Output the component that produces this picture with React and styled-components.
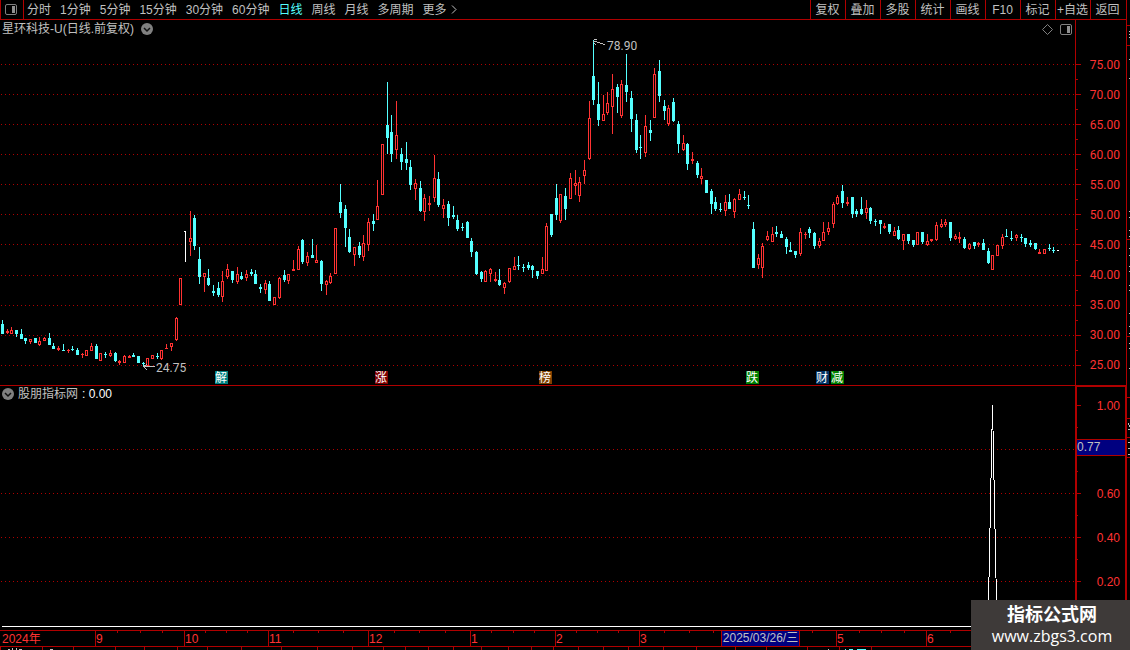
import React from "react";
import styled, { createGlobalStyle } from "styled-components";

const LINE = "#b00000";
const UP = "#ff3232";
const DOWN = "#54ffff";
const GREY = "#c0c0c0";

// x, high, body top, body bottom, low
const rising = [
  [7, 329, 331, 333, 334], [11, 327, 330, 334, 334], [30, 339, 339, 342, 344], [39, 337, 341, 345, 346],
  [44, 337, 338, 341, 341], [58, 346, 348, 350, 351], [68, 349, 350, 351, 353], [82, 353, 354, 355, 358],
  [86, 350, 350, 356, 356], [91, 343, 346, 351, 351], [100, 353, 353, 361, 361], [110, 350, 353, 356, 357],
  [119, 360, 361, 363, 365], [124, 355, 356, 363, 363], [129, 355, 356, 358, 358], [147, 358, 358, 366, 366],
  [152, 355, 355, 359, 359], [161, 350, 350, 359, 360], [166, 344, 348, 349, 349], [171, 343, 343, 347, 351],
  [176, 317, 318, 340, 341], [180, 278, 278, 305, 305], [190, 211, 238, 242, 256], [204, 273, 273, 277, 292],
  [222, 271, 281, 297, 302], [227, 264, 269, 277, 279], [237, 267, 274, 282, 284], [246, 270, 274, 278, 281],
  [265, 280, 283, 290, 294], [274, 297, 297, 305, 305], [279, 277, 278, 298, 299], [288, 274, 274, 281, 284],
  [293, 260, 269, 271, 271], [298, 246, 249, 270, 270], [307, 252, 256, 263, 266], [316, 245, 260, 263, 263],
  [326, 280, 281, 285, 295], [330, 273, 276, 283, 284], [335, 228, 228, 274, 274], [354, 247, 247, 255, 266],
  [363, 235, 243, 257, 261], [368, 218, 222, 245, 251], [377, 180, 206, 220, 220], [382, 144, 144, 195, 195],
  [396, 101, 135, 150, 159], [415, 179, 183, 189, 200], [424, 194, 198, 212, 221], [429, 196, 203, 205, 211],
  [434, 155, 178, 198, 202], [443, 199, 205, 209, 218], [485, 270, 271, 282, 282], [490, 268, 269, 274, 282],
  [495, 272, 279, 281, 282], [504, 282, 283, 288, 294], [509, 268, 268, 282, 283], [514, 257, 266, 270, 270],
  [542, 257, 269, 274, 274], [546, 223, 226, 271, 271], [560, 194, 194, 221, 223], [570, 173, 178, 199, 199],
  [575, 170, 183, 186, 195], [579, 177, 182, 196, 202], [584, 160, 170, 176, 184], [589, 101, 118, 159, 160],
  [603, 95, 114, 121, 121], [607, 92, 103, 113, 115], [612, 74, 89, 107, 134], [621, 80, 84, 116, 118],
  [645, 115, 126, 153, 157], [654, 68, 74, 118, 118], [668, 105, 108, 124, 126], [683, 135, 143, 150, 151],
  [692, 152, 159, 161, 164], [701, 168, 176, 179, 184], [725, 195, 202, 211, 216], [734, 198, 199, 212, 218],
  [739, 189, 194, 200, 200], [758, 254, 258, 265, 269], [762, 243, 246, 268, 278], [767, 231, 236, 240, 241],
  [772, 227, 234, 242, 242], [800, 228, 232, 254, 256], [805, 232, 234, 235, 239], [819, 238, 241, 246, 248],
  [823, 222, 232, 241, 241], [828, 222, 228, 232, 235], [833, 202, 204, 224, 228], [837, 195, 197, 204, 205],
  [847, 197, 202, 204, 206], [866, 200, 208, 213, 219], [884, 223, 226, 228, 229], [894, 227, 231, 236, 236],
  [903, 234, 234, 241, 250], [917, 232, 232, 245, 245], [927, 234, 241, 245, 246], [931, 239, 239, 241, 242],
  [936, 222, 225, 240, 241], [941, 219, 224, 227, 228], [945, 219, 222, 225, 227], [955, 234, 236, 239, 240],
  [959, 232, 237, 239, 243], [969, 243, 244, 249, 250], [978, 242, 243, 245, 247], [992, 255, 255, 270, 270],
  [997, 245, 245, 256, 256], [1002, 234, 237, 246, 249], [1016, 234, 235, 238, 241], [1039, 249, 252, 254, 254],
  [1044, 249, 249, 254, 254],
];

const falling = [
  [2, 320, 324, 334, 334], [16, 330, 330, 334, 337], [21, 329, 334, 339, 339], [25, 338, 338, 341, 344],
  [35, 338, 338, 343, 343], [49, 333, 338, 345, 345], [53, 343, 346, 349, 349], [63, 344, 350, 351, 351],
  [72, 346, 349, 350, 351], [77, 348, 350, 355, 355], [96, 344, 346, 359, 359], [105, 352, 354, 355, 358],
  [115, 352, 353, 361, 362], [133, 353, 355, 357, 357], [138, 356, 356, 363, 363], [143, 362, 363, 364, 367],
  [157, 353, 356, 357, 359], [194, 215, 218, 246, 250], [199, 247, 259, 277, 284], [208, 269, 278, 285, 286],
  [213, 285, 291, 293, 296], [218, 282, 288, 295, 297], [232, 271, 271, 280, 283], [241, 272, 276, 279, 280],
  [251, 269, 272, 274, 276], [255, 270, 274, 284, 284], [260, 284, 287, 289, 293], [269, 281, 284, 301, 301],
  [284, 270, 275, 280, 282], [302, 239, 240, 262, 264], [312, 239, 255, 258, 258], [321, 260, 261, 284, 291],
  [340, 184, 202, 213, 218], [345, 205, 209, 228, 247], [349, 229, 237, 252, 253], [359, 242, 246, 255, 258],
  [373, 214, 221, 224, 231], [387, 82, 125, 138, 154], [391, 115, 132, 154, 162], [401, 148, 154, 162, 170],
  [406, 142, 159, 163, 170], [410, 160, 167, 185, 190], [420, 181, 188, 211, 212], [438, 172, 179, 205, 207],
  [448, 201, 204, 218, 226], [453, 206, 215, 217, 219], [457, 215, 220, 229, 231], [462, 223, 227, 228, 231],
  [467, 221, 222, 238, 238], [471, 238, 241, 252, 257], [476, 251, 252, 274, 275], [481, 271, 272, 279, 282],
  [499, 269, 280, 285, 286], [518, 256, 265, 266, 270], [523, 264, 267, 268, 272], [528, 262, 265, 268, 270],
  [532, 265, 266, 270, 278], [537, 271, 271, 276, 279], [551, 214, 214, 235, 237], [556, 184, 198, 215, 220],
  [565, 188, 196, 209, 220], [593, 40, 76, 100, 105], [598, 82, 104, 120, 126], [617, 84, 87, 97, 113],
  [626, 54, 85, 92, 102], [631, 91, 98, 119, 132], [636, 114, 120, 150, 153], [640, 135, 147, 148, 159],
  [650, 120, 130, 133, 141], [659, 60, 71, 96, 102], [664, 100, 106, 111, 120], [673, 98, 102, 121, 122],
  [678, 121, 124, 144, 153], [687, 143, 144, 164, 170], [697, 161, 163, 175, 178], [706, 180, 180, 193, 193],
  [711, 189, 191, 204, 214], [715, 197, 202, 209, 211], [720, 203, 209, 210, 212], [729, 194, 202, 209, 209],
  [744, 191, 197, 198, 200], [748, 195, 205, 206, 209], [753, 222, 229, 268, 268], [776, 226, 232, 234, 237],
  [781, 231, 234, 238, 238], [786, 237, 239, 247, 254], [790, 242, 250, 252, 252], [795, 251, 251, 255, 258],
  [809, 227, 229, 233, 238], [814, 232, 233, 246, 249], [842, 185, 191, 203, 208], [852, 197, 197, 214, 218],
  [856, 209, 211, 214, 217], [861, 197, 209, 214, 215], [870, 207, 208, 221, 224], [875, 219, 221, 222, 226],
  [880, 220, 220, 224, 234], [889, 224, 224, 232, 234], [898, 226, 230, 239, 240], [908, 234, 234, 241, 244],
  [913, 240, 240, 245, 247], [922, 232, 232, 242, 244], [950, 222, 222, 238, 241], [964, 237, 239, 248, 249],
  [974, 242, 242, 246, 249], [983, 239, 243, 250, 250], [988, 248, 251, 263, 264], [1006, 229, 236, 237, 237],
  [1011, 231, 238, 239, 241], [1021, 234, 237, 238, 242], [1025, 238, 238, 244, 247], [1030, 240, 243, 245, 247],
  [1035, 243, 243, 249, 250], [1049, 244, 248, 249, 251], [1053, 247, 250, 251, 253],
];

const periods = ["分时", "1分钟", "5分钟", "15分钟", "30分钟", "60分钟", "日线", "周线", "月线", "多周期"];
const tools = ["复权", "叠加", "多股", "统计", "画线", "F10", "标记", "+自选", "返回"];
const prices = ["75.00", "70.00", "65.00", "60.00", "55.00", "50.00", "45.00", "40.00", "35.00", "30.00", "25.00"];
const priceLines = [64, 94, 124, 154, 184, 214, 244, 275, 305, 335, 365];
const priceHalves = [79, 109, 139, 169, 199, 229, 260, 290, 320, 350];
const valueLines = [449, 493, 537, 581];

const badges = [
  { x: 215, label: "解", color: "#008080" },
  { x: 375, label: "涨", color: "#800000" },
  { x: 539, label: "榜", color: "#804000" },
  { x: 746, label: "跌", color: "#008000" },
  { x: 816, label: "财", color: "#003366" },
  { x: 831, label: "减", color: "#008000" },
];

const weekTicks = [
  117, 140, 162, 205, 226, 247, 293, 318, 343, 394, 419, 445, 491, 513, 534, 576, 597, 618, 664, 689, 713, 812,
  859, 881, 904, 950,
];
const tabEdges = [
  0, 42, 73, 115, 144, 177, 207, 241, 281, 317, 352, 383, 405, 428, 453, 481, 508, 531, 553, 578, 603, 628, 663,
  696, 735, 766, 807, 839, 871,
];

const Candle = ({ data, color, hollow }) => {
  const [x, high, top, bottom, low] = data;
  const height = bottom - top;
  return (
    <g fill={color}>
      {high < top && <rect x={x} y={high} width="1" height={top - high} />}
      {low > bottom && <rect x={x} y={bottom} width="1" height={low - bottom} />}
      <rect x={x - 1} y={top} width="3" height={height} />
      {hollow && height > 2 && <rect x={x} y={top + 1} width="1" height={height - 2} fill="#000" />}
    </g>
  );
};

const DottedLine = ({ y }) => (
  <line x1="1" x2="1075" y1={y + 0.5} y2={y + 0.5} stroke={LINE} strokeDasharray="1 3" />
);

const PanelIcon = () => (
  <svg width="12" height="11" viewBox="0 0 12 11" fill="none" aria-hidden="true">
    <rect x="0.5" y="0.5" width="11" height="10" rx="1.5" stroke="#808080" />
    <rect x="7" y="2" width="3" height="7" fill="#909090" />
  </svg>
);

const DiamondIcon = () => (
  <svg width="11" height="11" viewBox="0 0 11 11" fill="none" aria-hidden="true">
    <path d="M5.5 0.5L10.5 5.5L5.5 10.5L0.5 5.5Z" stroke="#808080" />
  </svg>
);

const DropIcon = () => (
  <svg width="12" height="12" viewBox="0 0 12 12" fill="none" aria-hidden="true">
    <circle cx="6" cy="6" r="6" fill="#808080" />
    <path d="M3 5L6 8L9 5" stroke="#101010" strokeWidth="1.5" />
  </svg>
);

const MoreIcon = () => (
  <svg width="6" height="9" viewBox="0 0 6 9" fill="none" aria-hidden="true">
    <path d="M1 0.5L5 4.5L1 8.5" stroke={GREY} />
  </svg>
);

const PriceChart = () => (
  <Chart viewBox="0 38 1075 347" role="img" aria-label="日线">
    {priceLines.map((y) => (
      <DottedLine key={y} y={y} />
    ))}
    {rising.map((c) => (
      <Candle key={c[0]} data={c} color={UP} hollow />
    ))}
    {falling.map((c) => (
      <Candle key={c[0]} data={c} color={DOWN} />
    ))}
    <path d="M184 231h2v31h-1v-30h-1zM1057 250h2v1h-2z" fill="#fff" />
    <path d="M594 39h3v1h-3zM593 41h4v1h-4zM597 42h3v1h-3zM600 43h3v1h-3zM603 44h2v1h-2zM594 43h1v1h-1zM595 44h1v1h-1z" fill={GREY} />
    <path d="M143 366h12v1h-12zM144 365h2v1h-2zM146 364h1v1h-1zM144 367h1v1h-1zM145 368h1v1h-1zM146 369h1v1h-1z" fill={GREY} />
    <ChartText x="607" y="50">78.90</ChartText>
    <ChartText x="156" y="372">24.75</ChartText>
    {badges.map((b) => (
      <g key={b.x}>
        <path d={`M${b.x} 371h12l1 1v12h-13z`} fill={b.color} />
        <BadgeText x={b.x} y="382">{b.label}</BadgeText>
      </g>
    ))}
  </Chart>
);

const IndicatorChart = () => (
  <Chart viewBox="0 402 1075 228" role="img" aria-label="股朋指标网">
    {valueLines.map((y) => (
      <DottedLine key={y} y={y} />
    ))}
    <path d="M2 626.5H988L992.5 405L997 626.5H1075" stroke="#fff" fill="none" />
  </Chart>
);

const App = () => (
  <Screen>
    <GlobalStyle />
    <Terminal>
      <Toolbar>
        <PanelToggle aria-label="panel">
          <PanelIcon />
        </PanelToggle>
        <Periods>
          {periods.map((p) => (
            <PeriodButton key={p} $active={p === "日线"}>{p}</PeriodButton>
          ))}
          <PeriodButton>
            更多
            <MoreIcon />
          </PeriodButton>
        </Periods>
        <Tools>
          {tools.map((t) => (
            <ToolButton key={t}>{t}</ToolButton>
          ))}
        </Tools>
      </Toolbar>

      <PricePanel>
        <ChartColumn>
          <PriceTitle>
            <span>星环科技-U(日线.前复权)</span>
            <DropIcon />
            <TitleIcons>
              <DiamondIcon />
              <PanelIcon />
            </TitleIcons>
          </PriceTitle>
          <PriceChart />
        </ChartColumn>
        <PriceAxis>
          <Ticks viewBox="0 20 5 365">
            {priceLines.map((y) => (
              <rect key={y} x="0" y={y} width="5" height="1" />
            ))}
            {priceHalves.map((y) => (
              <rect key={y} x="0" y={y} width="2" height="1" />
            ))}
          </Ticks>
          <PriceLabels>
            {prices.map((p) => (
              <AxisLabel key={p}>{p}</AxisLabel>
            ))}
          </PriceLabels>
        </PriceAxis>
      </PricePanel>

      <IndicatorPanel>
        <ChartColumn>
          <IndicatorTitle>
            <DropIcon />
            <span>股朋指标网</span>
            <Value>: 0.00</Value>
          </IndicatorTitle>
          <IndicatorChart />
        </ChartColumn>
        <ValueAxis>
          <Ticks viewBox="0 387 5 243">
            {[405, 493, 537, 581].map((y) => (
              <rect key={y} x="0" y={y} width="4" height="1" />
            ))}
            {[427, 471, 515, 559].map((y) => (
              <rect key={y} x="0" y={y} width="1" height="1" />
            ))}
          </Ticks>
          <ValueLabels>
            <AxisLabel>1.00</AxisLabel>
            <CurrentValue>0.77</CurrentValue>
            <AxisLabel>0.60</AxisLabel>
            <AxisLabel>0.40</AxisLabel>
            <AxisLabel>0.20</AxisLabel>
          </ValueLabels>
        </ValueAxis>
      </IndicatorPanel>

      <Timeline>
        <Month>2024年</Month>
        <Month $line>9</Month>
        <Month $line>10</Month>
        <Month $line>11</Month>
        <Month $line>12</Month>
        <Month $line>1</Month>
        <Month $line>2</Month>
        <Month $line>3</Month>
        <CurrentDate>2025/03/26/三</CurrentDate>
        <Month />
        <Month $line>5</Month>
        <Month $line>6</Month>
        <WeekTicks viewBox="0 0 1126 2" preserveAspectRatio="none">
          {weekTicks.map((x) => (
            <rect key={x} x={x} y="0" width="1" height="2" />
          ))}
        </WeekTicks>
      </Timeline>

      <FooterEdge viewBox="0 0 1126 3" preserveAspectRatio="xMinYMin slice">
        {tabEdges.map((x) => (
          <rect key={x} x={x} y="0" width="1" height="3" fill={LINE} />
        ))}
        <path d="M8 2h2v1h-2zM12 1h1v2h-1zM16 1h1v2h-1zM19 2h3v1h-3zM50 2h3v1h-3zM828 2h1v1h-1z" fill={GREY} />
        <path d="M845 2h1v1h-1zM849 2h4v1h-4zM857 2h9v1h-9z" fill={DOWN} />
      </FooterEdge>
    </Terminal>

    <SideEdge viewBox="0 0 3 650" preserveAspectRatio="xMinYMin slice">
      <path d="M0 25h3v1h-3zM0 45h3v1h-3zM0 239h3v1h-3zM0 336h3v1h-3zM0 397h3v1h-3zM0 418h3v1h-3zM0 437h3v1h-3zM0 457h3v1h-3z" fill={LINE} />
      <path d="M2 31h1v1h-1zM2 34h1v1h-1zM2 37h1v1h-1zM2 59h1v1h-1zM2 78h1v1h-1zM2 211h1v1h-1zM2 217h1v1h-1zM2 230h1v1h-1zM2 236h1v1h-1zM2 248h1v1h-1zM2 255h1v1h-1zM2 266h1v1h-1zM2 271h1v1h-1zM2 285h1v1h-1zM2 290h1v1h-1zM2 313h1v1h-1zM2 326h1v1h-1zM2 333h1v1h-1zM2 343h1v1h-1zM2 348h1v1h-1zM2 368h1v1h-1zM1 423h1v2h-1zM2 425h1v2h-1zM1 429h2v1h-2zM1 442h2v1h-2zM1 448h2v1h-2zM1 454h2v1h-2z" fill={GREY} />
    </SideEdge>

    <SiteMark>
      <SiteName>指标公式网</SiteName>
      <SiteUrl href="#">www.zbgs3.com</SiteUrl>
    </SiteMark>
  </Screen>
);

const GlobalStyle = createGlobalStyle`
  * {
    box-sizing: border-box;
  }

  body {
    margin: 0;
    background: #000;
    color: ${GREY};
    font: 12px/16px "Liberation Sans", "Noto Sans CJK SC", sans-serif;
  }

  button {
    padding: 0;
    border: 0;
    background: none;
    color: inherit;
    font: inherit;
    white-space: nowrap;
    cursor: pointer;
  }

  svg {
    flex: none;
  }
`;

const Screen = styled.div`
  display: flex;
  height: 100vh;
  overflow: hidden;
`;

const Terminal = styled.main`
  flex: 1;
  min-width: 0;
  display: grid;
  grid-template-rows: 20px minmax(0, 366fr) minmax(0, 244fr) 17px 3px;
  border-right: 1px solid ${LINE};
`;

const Toolbar = styled.nav`
  display: flex;
  border-bottom: 1px solid ${LINE};
`;

const PanelToggle = styled.button`
  display: grid;
  place-items: center;
  width: 24px;
  padding-right: 2px;
  border-left: 1px solid ${LINE};
  border-right: 1px solid ${LINE};
`;

const Periods = styled.div`
  display: flex;
  gap: 9px;
  padding-left: 3px;
`;

const PeriodButton = styled.button`
  display: flex;
  align-items: center;
  gap: 4px;
  color: ${({ $active }) => ($active ? DOWN : "inherit")};
`;

const Tools = styled.div`
  display: flex;
  margin-left: auto;
  padding-right: 1px;
`;

const ToolButton = styled.button`
  width: 35px;
  padding-right: 1px;
  border-left: 1px solid ${LINE};
`;

const PricePanel = styled.section`
  display: grid;
  grid-template-columns: minmax(0, 1fr) 51px;
  border-bottom: 1px solid ${LINE};
`;

const IndicatorPanel = styled.section`
  display: grid;
  grid-template-columns: minmax(0, 1fr) 51px;
`;

const ChartColumn = styled.div`
  display: flex;
  flex-direction: column;
  min-height: 0;
`;

const PriceTitle = styled.header`
  display: flex;
  align-items: center;
  gap: 7px;
  height: 18px;
  padding: 0 3px 0 2px;
`;

const TitleIcons = styled.div`
  display: flex;
  align-items: center;
  gap: 7px;
  margin-left: auto;
`;

const IndicatorTitle = styled.header`
  display: flex;
  align-items: center;
  gap: 4px;
  height: 16px;
  padding-left: 2px;
`;

const Value = styled.span`
  color: #fff;
`;

const Chart = styled.svg`
  flex: 1;
  width: 100%;
  min-height: 0;
  shape-rendering: crispEdges;
`;

const ChartText = styled.text`
  fill: ${GREY};
  font-family: Roboto, sans-serif;
  font-size: 12px;
`;

const BadgeText = styled.text`
  fill: #fff;
  font-size: 12px;
`;

const PriceAxis = styled.div`
  display: flex;
  padding-right: 1px;
  border-left: 1px solid ${LINE};
  color: ${UP};
  font-family: Roboto, sans-serif;
`;

const ValueAxis = styled.div`
  display: flex;
  border: solid ${LINE};
  border-width: 1px 1px 0 2px;
  color: ${UP};
`;

const Ticks = styled.svg`
  width: 5px;
  height: 100%;
  margin-right: -5px;
  fill: ${LINE};
  shape-rendering: crispEdges;
`;

const PriceLabels = styled.div`
  flex: 1;
  display: flex;
  flex-direction: column;
  justify-content: space-between;
  padding: 37px 0 12px;
`;

const ValueLabels = styled.div`
  flex: 1;
  display: flex;
  flex-direction: column;
  gap: 28px;
  padding-top: 11px;
`;

const AxisLabel = styled.span`
  padding-right: 5px;
  text-align: right;
`;

const CurrentValue = styled.span`
  height: 17px;
  margin: -3px 0 2px;
  border: solid ${LINE};
  border-width: 1px 0;
  background: #000080;
  color: ${GREY};
  line-height: 15px;
`;

const Timeline = styled.div`
  position: relative;
  display: grid;
  grid-template-columns: 95fr 89fr 84fr 100fr 102fr 85fr 84fr 82fr 79fr 36fr 90fr 200fr;
  border: solid ${LINE};
  border-width: 1px 0;
  color: ${UP};
  line-height: 15px;
`;

const Month = styled.span`
  min-width: 0;
  padding-top: 1px;
  padding-left: ${({ $line }) => ($line ? "0" : "2px")};
  border-left: ${({ $line }) => ($line ? `1px solid ${LINE}` : "0")};
  line-height: 14px;
`;

const CurrentDate = styled.span`
  border: solid ${LINE};
  border-width: 0 1px;
  background: #000080;
  color: ${GREY};
  text-align: center;
  white-space: nowrap;
`;

const WeekTicks = styled.svg`
  position: absolute;
  top: 0;
  left: 0;
  width: 100%;
  height: 2px;
  fill: ${LINE};
  shape-rendering: crispEdges;
`;

const FooterEdge = styled.svg`
  width: 100%;
  height: 3px;
  shape-rendering: crispEdges;
`;

const SideEdge = styled.svg`
  width: 3px;
  height: 100%;
  shape-rendering: crispEdges;
`;

const SiteMark = styled.aside`
  position: fixed;
  right: 0;
  bottom: 0;
  display: flex;
  flex-direction: column;
  align-items: center;
  width: 159px;
  height: 50px;
  padding: 5px 0 0 3px;
  background: #3e3a39;
  color: #fff;
`;

const SiteName = styled.strong`
  font-size: 18px;
  line-height: 21px;
`;

const SiteUrl = styled.a`
  color: inherit;
  font-family: "Open Sans", sans-serif;
  font-size: 16px;
  line-height: 20px;
  text-decoration: none;
`;

export default App;
